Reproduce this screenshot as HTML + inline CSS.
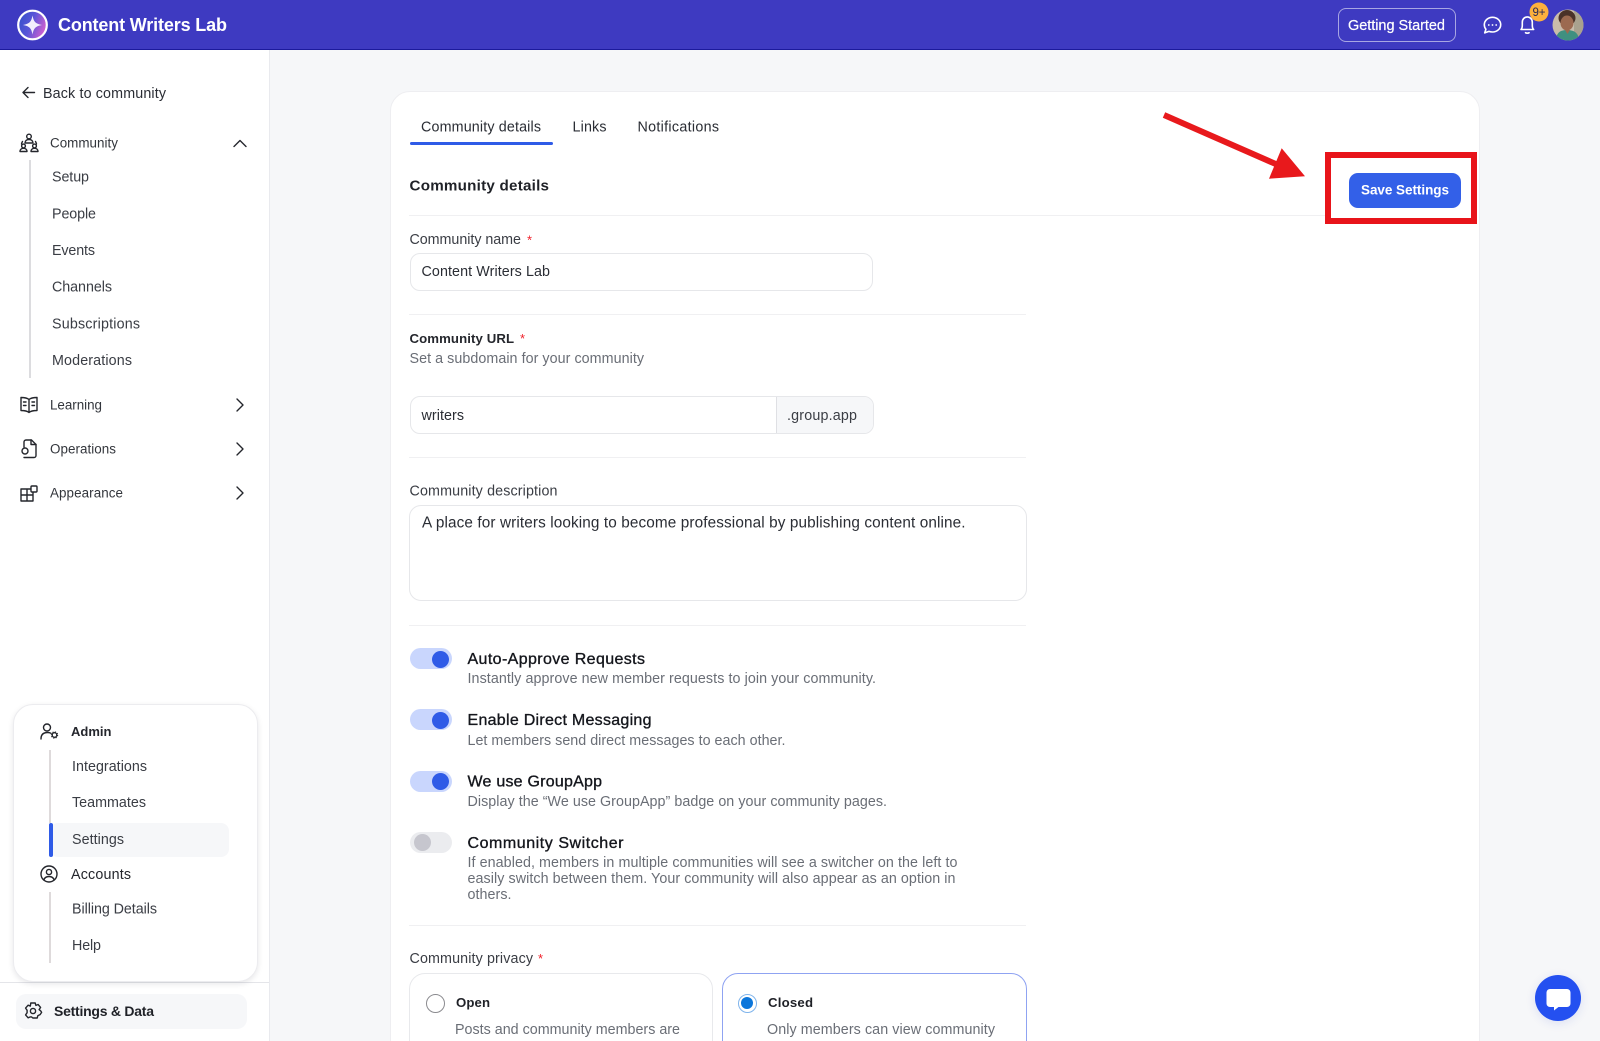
<!DOCTYPE html>
<html lang="en"><head><meta charset="utf-8"><title>Community settings</title>
<style>
html,body{margin:0;padding:0;width:1600px;height:1041px;overflow:hidden;background:#f6f7f9;font-family:"Liberation Sans",sans-serif}
#root{position:relative;width:1600px;height:1041px;overflow:hidden;background:#f6f7f9}
.b{position:absolute;box-sizing:border-box}
svg{position:absolute;left:0;top:0}
text{font-family:"Liberation Sans",sans-serif;font-size:14.3px;fill:#2a2d34}
.w{fill:#fff}.s{font-weight:700}.g{fill:#6a6e76}.d{fill:#3a3d44}.n{fill:#33363c;font-size:13.4px}.t{font-size:16px;fill:#14161c;stroke:#14161c;stroke-width:.35px}.r{fill:#f0202a;font-size:13px}
.i{fill:none;stroke:#24262c;stroke-width:1.4;stroke-linecap:round;stroke-linejoin:round}
.h{fill:none;stroke:#fff;stroke-width:1.6;stroke-linecap:round;stroke-linejoin:round}
</style></head><body><div id="root">
<div class="b" style="left:0;top:0;width:1600px;height:50px;background:#3e3ac1;border-bottom:1px solid #1c1a9c"></div>
<div class="b" style="left:0;top:50px;width:270px;height:991px;background:#fff;border-right:1px solid #e9eaee"></div>
<div class="b" style="left:0;top:982px;width:269px;height:1px;background:#e4e5e9"></div>
<div class="b" style="left:13px;top:704px;width:245px;height:278px;background:#fff;border:1px solid #ececef;border-radius:20px;box-shadow:0 2px 6px rgba(20,20,40,.10)"></div>
<div class="b" style="left:16px;top:994px;width:231px;height:35px;background:#f6f7f9;border-radius:10px"></div>
<div class="b" style="left:29px;top:160px;width:2px;height:218px;background:#dcdcdf"></div>
<div class="b" style="left:49px;top:750px;width:2px;height:73px;background:#dedadb"></div>
<div class="b" style="left:49px;top:892px;width:2px;height:71px;background:#dedadb"></div>
<div class="b" style="left:50px;top:823px;width:179px;height:34px;background:#f6f7f9;border-radius:8px"></div>
<div class="b" style="left:48.5px;top:822.5px;width:4px;height:34.5px;background:#2f5be7;border-radius:2px"></div>

<div class="b" style="left:390px;top:91px;width:1090px;height:1000px;background:#fff;border:1px solid #eeeef1;border-radius:20px"></div>
<div class="b" style="left:410px;top:142px;width:143px;height:3px;background:#2f5be7;border-radius:2px"></div>
<div class="b" style="left:409px;top:215px;width:1052px;height:1px;background:#f0f0f2"></div>
<div class="b" style="left:409px;top:314px;width:617px;height:1px;background:#f0f0f2"></div>
<div class="b" style="left:409px;top:457px;width:617px;height:1px;background:#f0f0f2"></div>
<div class="b" style="left:409px;top:624.5px;width:617px;height:1px;background:#f0f0f2"></div>
<div class="b" style="left:409px;top:925px;width:617px;height:1px;background:#f0f0f2"></div>

<div class="b" style="left:409.5px;top:252.5px;width:463px;height:38.5px;border:1px solid #e6e7ea;border-radius:10px"></div>
<div class="b" style="left:409.5px;top:396px;width:464px;height:38px;border:1px solid #e6e7ea;border-radius:10px;overflow:hidden"><div class="b" style="left:365px;top:0;width:99px;height:36px;background:#f6f7f9;border-left:1px solid #dfe0e4"></div></div>
<div class="b" style="left:409px;top:505px;width:617.5px;height:96px;border:1px solid #e6e7ea;border-radius:12px"></div>

<div class="b" style="left:409.5px;top:648px;width:42.5px;height:21px;background:#c9d6fd;border-radius:11px"></div>
<div class="b" style="left:431.5px;top:650.5px;width:17px;height:17px;background:#2f5be7;border-radius:50%"></div>
<div class="b" style="left:409.5px;top:709px;width:42.5px;height:21px;background:#c9d6fd;border-radius:11px"></div>
<div class="b" style="left:431.5px;top:711.5px;width:17px;height:17px;background:#2f5be7;border-radius:50%"></div>
<div class="b" style="left:409.5px;top:771px;width:42.5px;height:21px;background:#c9d6fd;border-radius:11px"></div>
<div class="b" style="left:431.5px;top:773px;width:17px;height:17px;background:#2f5be7;border-radius:50%"></div>
<div class="b" style="left:409.5px;top:832px;width:42.5px;height:21px;background:#ebecef;border-radius:11px"></div>
<div class="b" style="left:413.5px;top:834px;width:17px;height:17px;background:#c6c6ce;border-radius:50%"></div>

<div class="b" style="left:409px;top:973px;width:304px;height:100px;border:1px solid #e8e9ec;border-radius:16px"></div>
<div class="b" style="left:722px;top:973px;width:304.5px;height:100px;border:1px solid #8fa3f2;border-radius:16px"></div>
<div class="b" style="left:425.5px;top:993.5px;width:19px;height:19px;border:1.3px solid #8b8b8f;border-radius:50%"></div>
<div class="b" style="left:737.5px;top:993.5px;width:19px;height:19px;border:1.3px solid #7fb4ec;border-radius:50%"></div>
<div class="b" style="left:741px;top:997px;width:12px;height:12px;background:#0b76db;border-radius:50%"></div>

<div class="b" style="left:1325px;top:152px;width:152px;height:72px;border:6px solid #e8141a;background:#fff"></div>
<div class="b" style="left:1349px;top:173px;width:112px;height:34.5px;background:#3360e8;border-radius:9px"></div>
<div class="b" style="left:1337.5px;top:8px;width:118.5px;height:34px;border:1px solid rgba(255,255,255,.55);border-radius:8px"></div>
<div class="b" style="left:1535px;top:974.5px;width:46px;height:46px;background:#2450f0;border-radius:50%;box-shadow:0 2px 10px rgba(30,60,200,.12)"></div>

<svg width="1600" height="1041" viewBox="0 0 1600 1041" xmlns="http://www.w3.org/2000/svg">
<defs>
<linearGradient id="lg" x1="0" y1="0" x2="1" y2=".4"><stop offset="0" stop-color="#2f4fc8"/><stop offset=".55" stop-color="#5a55d8"/><stop offset="1" stop-color="#c65fd0"/></linearGradient>
<clipPath id="av"><circle cx="1568" cy="25" r="15.5"/></clipPath>
</defs>

<!-- header -->
<circle cx="32.5" cy="25" r="14.3" fill="url(#lg)" stroke="#fff" stroke-width="2.2"/>
<path d="M32.5 15.5 C33.6 21.8 35.7 23.9 42 25 C35.7 26.1 33.6 28.2 32.5 34.5 C31.4 28.2 29.3 26.1 23 25 C29.3 23.9 31.4 21.8 32.5 15.5Z" fill="#f2effc"/>
<text x="58" y="31" class="w s" style="font-size:18px" textLength="169" lengthAdjust="spacing">Content Writers Lab</text>
<text x="1348" y="30" class="w" style="font-size:14.5px;stroke:#fff;stroke-width:.2px" textLength="97" lengthAdjust="spacing">Getting Started</text>
<path class="h" d="M1492.5 17.3c-4.6 0-8.2 3.3-8.2 7.5 0 1.7.6 3.2 1.6 4.5l-1.2 3.6 4.2-1.5c1.1.4 2.3.6 3.6.6 4.6 0 8.2-3.3 8.2-7.4s-3.6-7.3-8.2-7.3Z"/>
<circle cx="1488.8" cy="25" r=".9" fill="#fff"/><circle cx="1492.5" cy="25" r=".9" fill="#fff"/><circle cx="1496.2" cy="25" r=".9" fill="#fff"/>
<path class="h" d="M1521 29.5c1.1-1.1 1.3-2.6 1.3-4.3v-3c0-3 2.2-5.3 5-5.3s5 2.3 5 5.3v3c0 1.7.2 3.2 1.3 4.3Z"/>
<path class="h" d="M1525.5 32.7c.8.6 2.8.6 3.6 0"/>
<circle cx="1539" cy="12" r="9.5" fill="#fdb03d"/>
<text x="1532.5" y="16" style="font-size:11.5px;fill:#2a2a55" textLength="13" lengthAdjust="spacing">9+</text>
<g clip-path="url(#av)">
<rect x="1552" y="9" width="32" height="32" fill="#c9bcaa"/>
<rect x="1574" y="9" width="10" height="32" fill="#a9a28e"/>
<ellipse cx="1567" cy="18" rx="8.5" ry="8" fill="#4a3228"/>
<ellipse cx="1567" cy="23" rx="6.5" ry="7.5" fill="#9c6a50"/>
<path d="M1556 41c0-8 4-11 11-11s12 3 12 11Z" fill="#3f9080"/>
<path d="M1565 30l2.500 4 2.500-4Z" fill="#9c6a50"/>
</g>

<!-- sidebar -->
<path class="i" d="M34.500 92.500H23M28 87.500l-5 5 5 5"/>
<text x="43" y="98" textLength="123" lengthAdjust="spacing">Back to community</text>
<circle class="i" cx="29" cy="136.500" r="2.300"/><path class="i" d="M25 143c0-2.300 1.700-3.500 4-3.500s4 1.200 4 3.500Z"/>
<circle class="i" cx="23.500" cy="146" r="1.900"/><path class="i" d="M20 151.500c0-2 1.500-3.200 3.500-3.200s3.500 1.200 3.500 3.200Z"/>
<circle class="i" cx="34.500" cy="146" r="1.900"/><path class="i" d="M31 151.500c0-2 1.500-3.200 3.500-3.200s3.500 1.200 3.500 3.200Z"/>
<path class="i" d="M22.500 141.500c-.6 1-.9 1.500-1 2.500M35.500 141.500c.6 1 .9 1.500 1 2.500"/>
<text x="50" y="147.500" class="n" textLength="68" lengthAdjust="spacing">Community</text>
<path class="i" d="M234 146.500l6-6 6 6" stroke-width="1.600"/>
<text x="52" y="181.500" class="d" textLength="37" lengthAdjust="spacing">Setup</text>
<text x="52" y="218.500" class="d" textLength="44" lengthAdjust="spacing">People</text>
<text x="52" y="255" class="d" textLength="43" lengthAdjust="spacing">Events</text>
<text x="52" y="291.500" class="d" textLength="60" lengthAdjust="spacing">Channels</text>
<text x="52" y="328.500" class="d" textLength="88" lengthAdjust="spacing">Subscriptions</text>
<text x="52" y="365" class="d" textLength="80" lengthAdjust="spacing">Moderations</text>

<path class="i" d="M29 399.500c-1.500-1.300-3.500-2-8-2v13c4.500 0 6.500.7 8 2 1.500-1.300 3.500-2 8-2v-13c-4.500 0-6.500.7-8 2Zm0 0v13"/>
<path class="i" d="M23.500 402h2.500M23.500 405.500h2.500M32 402h2.500M32 405.500h2.500" stroke-width="1.200"/>
<text x="50" y="409.500" class="n" textLength="52" lengthAdjust="spacing">Learning</text>
<path class="i" d="M237 399l6 6-6 6" stroke-width="1.600"/>

<path class="i" d="M24 447v-5c0-1 .8-2 2-2h5.500l4.500 4.500v11c0 1-.8 2-2 2H24"/>
<path class="i" d="M31 440v4.500h5"/>
<circle class="i" cx="25" cy="451" r="3"/>
<text x="50" y="453.500" class="n" textLength="66" lengthAdjust="spacing">Operations</text>
<path class="i" d="M237 443l6 6-6 6" stroke-width="1.600"/>

<path class="i" d="M21 489h12v12H21ZM21 495h12M27 489v12"/>
<rect class="i" x="31" y="486" width="6" height="6" rx="1" style="fill:#fff"/>
<text x="50" y="497.500" class="n" textLength="73" lengthAdjust="spacing">Appearance</text>
<path class="i" d="M237 487l6 6-6 6" stroke-width="1.600"/>

<circle class="i" cx="47" cy="727.500" r="3.500"/><path class="i" d="M41 739c0-4 2-6.500 6.500-6.500 1.500 0 2.700.3 3.500.8"/>
<circle class="i" cx="54.500" cy="735" r="2.300"/><circle cx="54.500" cy="735" r="3.200" fill="none" stroke="#24262c" stroke-width="1" stroke-dasharray="1.200 1.300"/>
<text x="71" y="736" class="s" style="font-size:13px;fill:#24262c" textLength="40.500" lengthAdjust="spacing">Admin</text>
<text x="72" y="771" class="d" textLength="75" lengthAdjust="spacing">Integrations</text>
<text x="72" y="807" class="d" textLength="74" lengthAdjust="spacing">Teammates</text>
<text x="72" y="844" class="d" textLength="52" lengthAdjust="spacing">Settings</text>
<circle class="i" cx="49" cy="874" r="8"/><circle class="i" cx="49" cy="872" r="2.600"/><path class="i" d="M43.800 880c.8-2.500 2.800-3.500 5.200-3.500s4.400 1 5.200 3.500"/>
<text x="71" y="879" style="font-size:14.300px;fill:#24262c" textLength="60" lengthAdjust="spacing">Accounts</text>
<text x="72" y="913.500" class="d" textLength="85" lengthAdjust="spacing">Billing Details</text>
<text x="72" y="950" class="d" textLength="29" lengthAdjust="spacing">Help</text>
<g transform="translate(33 1011)"><path class="i" d="M-2.200-8h4.400l.7 2.400 2.200-.9 2.500 2.900-1.500 2.200L7.800 0l.8 1.400-1.500 2.200-2.200 1 -.7 2.400h-4.400L-1.500 5.900h-1.200l-2.200.9L-7.400 3.900l1.500-2.200V-.7L-7.400-2.900l2.500-2.900 2.200.9Z"/><circle class="i" cx="0" cy="0" r="2.600"/></g>
<text x="54" y="1016" class="s" style="font-size:14px;fill:#1f2127" textLength="100" lengthAdjust="spacing">Settings &amp; Data</text>

<!-- tabs -->
<text x="421" y="131.500" textLength="120" lengthAdjust="spacing">Community details</text>
<text x="572.500" y="131.500" textLength="34" lengthAdjust="spacing">Links</text>
<text x="637.500" y="131.500" textLength="81.500" lengthAdjust="spacing">Notifications</text>
<text x="409.500" y="190.500" class="s" style="font-size:15.200px;fill:#1f2127" textLength="139.500" lengthAdjust="spacing">Community details</text>

<line x1="1164" y1="115" x2="1278" y2="165" stroke="#e8191c" stroke-width="6"/>
<path d="M1281.700 148.300L1305 176.300L1269 178.700Z" fill="#e8191c"/>
<text x="1361" y="194.500" class="w s" style="font-size:13.500px" textLength="88" lengthAdjust="spacing">Save Settings</text>

<!-- form -->
<text x="409.500" y="244" class="d" textLength="111.500" lengthAdjust="spacing">Community name</text>
<text x="527" y="244.500" class="r">*</text>
<text x="421.500" y="276" textLength="128.500" lengthAdjust="spacing">Content Writers Lab</text>
<text x="409.500" y="343" class="s" style="font-size:13.200px;fill:#24262c" textLength="104.500" lengthAdjust="spacing">Community URL</text>
<text x="520" y="343" class="r">*</text>
<text x="409.500" y="363" class="g" textLength="234.500" lengthAdjust="spacing">Set a subdomain for your community</text>
<text x="421.500" y="420" textLength="42.500" lengthAdjust="spacing">writers</text>
<text x="787" y="420" class="d" textLength="70" lengthAdjust="spacing">.group.app</text>
<text x="409.500" y="495.500" class="d" textLength="148" lengthAdjust="spacing">Community description</text>
<text x="422" y="527.500" style="font-size:15.300px" textLength="543.500" lengthAdjust="spacing">A place for writers looking to become professional by publishing content online.</text>

<text x="467.500" y="664" class="t" textLength="177.500" lengthAdjust="spacing">Auto-Approve Requests</text>
<text x="467.500" y="683" class="g" textLength="408.500" lengthAdjust="spacing">Instantly approve new member requests to join your community.</text>
<text x="467.500" y="725" class="t" textLength="184" lengthAdjust="spacing">Enable Direct Messaging</text>
<text x="467.500" y="745" class="g" textLength="318" lengthAdjust="spacing">Let members send direct messages to each other.</text>
<text x="467.500" y="786.500" class="t" textLength="134.500" lengthAdjust="spacing">We use GroupApp</text>
<text x="467.500" y="806" class="g" textLength="419.500" lengthAdjust="spacing">Display the “We use GroupApp” badge on your community pages.</text>
<text x="467.500" y="848" class="t" textLength="156" lengthAdjust="spacing">Community Switcher</text>
<text x="467.500" y="867" class="g" textLength="490" lengthAdjust="spacing">If enabled, members in multiple communities will see a switcher on the left to</text>
<text x="467.500" y="883" class="g" textLength="488" lengthAdjust="spacing">easily switch between them. Your community will also appear as an option in</text>
<text x="467.500" y="899" class="g" textLength="44" lengthAdjust="spacing">others.</text>

<text x="409.500" y="963" class="d" textLength="123.500" lengthAdjust="spacing">Community privacy</text>
<text x="538" y="963" class="r">*</text>
<text x="456" y="1007" class="s" style="font-size:13.200px;fill:#1f2127" textLength="34" lengthAdjust="spacing">Open</text>
<text x="768" y="1007" class="s" style="font-size:13.200px;fill:#1f2127" textLength="45" lengthAdjust="spacing">Closed</text>
<text x="455" y="1034" class="g" textLength="225" lengthAdjust="spacing">Posts and community members are</text>
<text x="767" y="1034" class="g" textLength="228" lengthAdjust="spacing">Only members can view community</text>

<path d="M1550 989h17a3.500 3.500 0 0 1 3.500 3.500v11a3.500 3.500 0 0 1-3.500 3.500h-8.500l-4.500 3.500v-3.500H1550a3.500 3.500 0 0 1-3.500-3.500v-11a3.500 3.500 0 0 1 3.500-3.500Z" fill="#fff"/>
</svg>
</div></body></html>
